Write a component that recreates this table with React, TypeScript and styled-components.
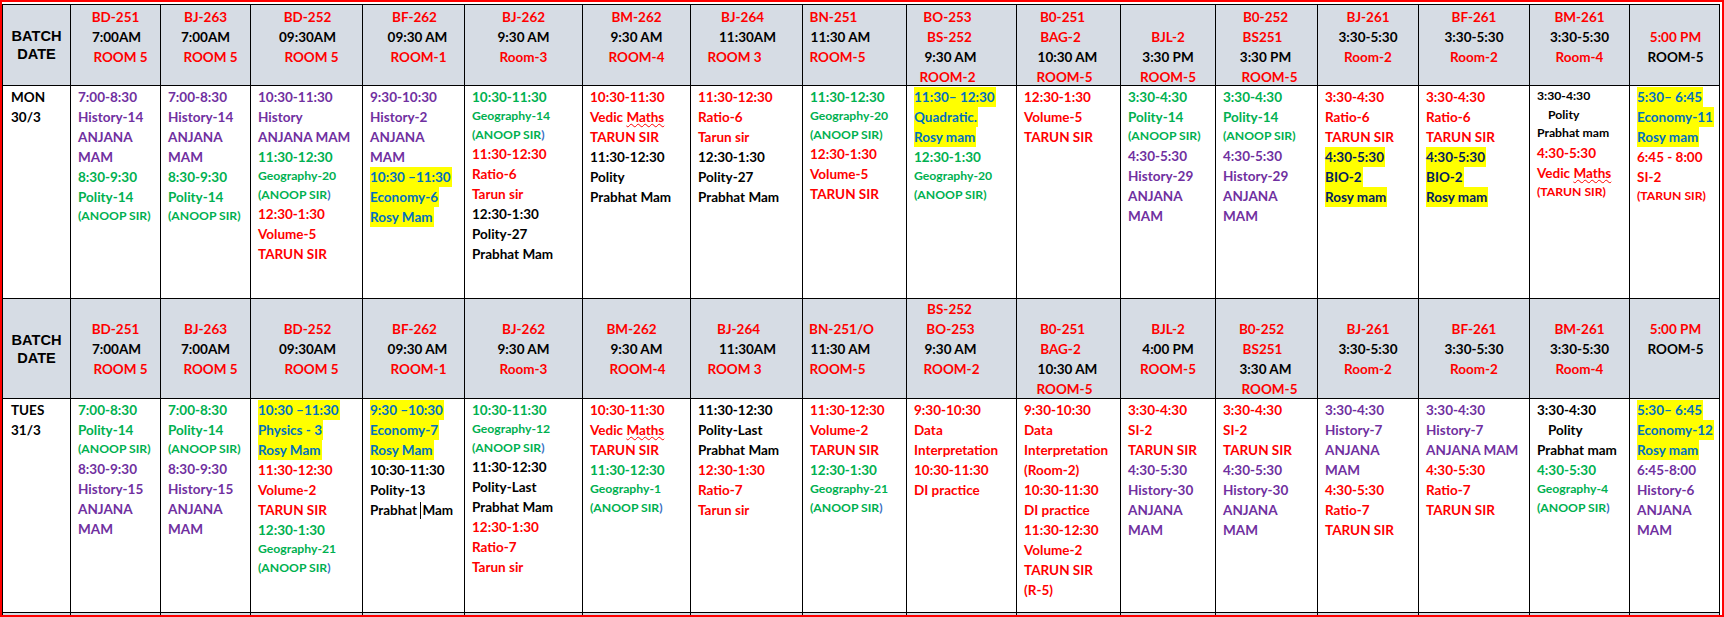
import React from 'react';
import styled, { createGlobalStyle } from 'styled-components';

const GlobalStyle = createGlobalStyle`
  html, body {
    margin: 0;
    padding: 0;
    background: #ffffff;
  }
  body {
    font-family: Lato, "Liberation Sans", sans-serif;
  }
`;

// widths of the cells between the black grid lines
const COLS = [67, 89, 89, 111, 101, 117, 107, 111, 103, 109, 103, 94, 101, 100, 110, 99, 89];

type Tone = 'r' | 'g' | 'p' | 'k' | 'b' | 'n';

const INK: Record<Tone, string> = {
    r: '#ff0000',
    g: '#00b050',
    p: '#7030a0',
    k: '#000000',
    b: '#0070c0',
    n: '#002060',
};

const Frame = styled.div`
    width: 1724px;
    height: 617px;
    box-sizing: border-box;
    border: 2px solid #ff0000;
    padding-top: 2px;
    overflow: hidden;
    background: #ffffff;
`;

const Sheet = styled.div`
    display: grid;
    grid-template-columns: ${COLS.map((c) => `${c}px`).join(' ')};
    grid-template-rows: 80px 212px 99px 213px 40px;
    gap: 1px;
    padding: 1px;
    width: max-content;
    background: #000000;
`;

const HeadCell = styled.div<{ $top: number }>`
    background: #d6dce4;
    padding-top: ${(p) => p.$top}px;
    text-align: center;
    font-weight: 700;
    font-size: 13.5px;
    line-height: 20px;
    white-space: nowrap;
`;

const HeadLine = styled.div<{ $tone: Tone; $shift: number }>`
    height: 20px;
    color: ${(p) => INK[p.$tone]};
    ${(p) => (p.$shift > 0 ? `padding-left: ${p.$shift * 2}px;` : `padding-right: ${-p.$shift * 2}px;`)}
`;

const BatchCell = styled.div`
    background: #d6dce4;
    display: flex;
    flex-direction: column;
    align-items: center;
    justify-content: center;
    font-family: "Liberation Sans", Arial, sans-serif;
    font-weight: 700;
    font-size: 14.6px;
    line-height: 18px;
    color: #000000;
`;

const BlankHead = styled.div`
    background: #d6dce4;
`;

const DateCell = styled.div`
    background: #ffffff;
    padding: 1px 0 0 8px;
    font-weight: 700;
    font-size: 13.5px;
    line-height: 20px;
    color: #000000;
`;

const BodyCell = styled.div`
    background: #ffffff;
    padding: 1px 0 0 7px;
    font-weight: 700;
    white-space: nowrap;
`;

const Line = styled.div<{ $tone: Tone; $small: boolean; $indent: boolean }>`
    color: ${(p) => INK[p.$tone]};
    font-size: ${(p) => (p.$small ? '12.2px' : '13.5px')};
    line-height: ${(p) => (p.$small ? '18.5px' : '20px')};
    padding-left: ${(p) => (p.$indent ? '11px' : '0')};
`;

const Mark = styled.span`
    display: inline-block;
    background: #ffff00;
    padding-right: 1px;
`;

const Squiggle = styled.span`
    text-decoration-line: underline;
    text-decoration-style: wavy;
    text-decoration-color: #ff0000;
    text-decoration-thickness: 1px;
    text-underline-offset: 1px;
    text-decoration-skip-ink: none;
`;

const Paren = styled.span`
    color: #3b6fc4;
`;

const Caret = styled.span`
    display: inline-block;
    width: 0;
    height: 17px;
    margin-right: 1px;
    border-left: 1px solid #000000;
    vertical-align: -4px;
`;

// "tone|text|shift", an empty string is an empty line
const HEAD_ONE: string[][] = [
    ['r|BD-251', 'k|7:00AM|1', 'r|ROOM 5|5'],
    ['r|BJ-263', 'k|7:00AM', 'r|ROOM 5|5'],
    ['r|BD-252|1', 'k|09:30AM|1', 'r|ROOM 5|5'],
    ['r|BF-262|1', 'k|09:30 AM|4', 'r|ROOM-1|5'],
    ['r|BJ-262', 'k|9:30 AM', 'r|Room-3'],
    ['r|BM-262', 'k|9:30 AM', 'r|ROOM-4'],
    ['r|BJ-264|-4', 'k|11:30AM|1', 'r|ROOM 3|-12'],
    ['r|BN-251|-21', 'k|11:30 AM|-14', 'r|ROOM-5|-17'],
    ['r|BO-253|-14', 'r|BS-252|-12', 'k|9:30 AM|-11', 'r|ROOM-2|-14'],
    ['r|B0-251|-6', 'r|BAG-2|-8', 'k|10:30 AM|-1', 'r|ROOM-5|-4'],
    ['', 'r|BJL-2', 'k|3:30 PM', 'r|ROOM-5'],
    ['r|B0-252|-1', 'r|BS251|-4', 'k|3:30 PM|-1', 'r|ROOM-5|3'],
    ['r|BJ-261', 'k|3:30-5:30', 'r|Room-2'],
    ['r|BF-261', 'k|3:30-5:30', 'r|Room-2'],
    ['r|BM-261', 'k|3:30-5:30', 'r|Room-4'],
    ['', 'r|5:00 PM|1', 'k|ROOM-5|1'],
];

const HEAD_TWO: string[][] = [
    ['', 'r|BD-251', 'k|7:00AM|1', 'r|ROOM 5|5'],
    ['', 'r|BJ-263', 'k|7:00AM', 'r|ROOM 5|5'],
    ['', 'r|BD-252|1', 'k|09:30AM|1', 'r|ROOM 5|5'],
    ['', 'r|BF-262|1', 'k|09:30 AM|4', 'r|ROOM-1|5'],
    ['', 'r|BJ-262', 'k|9:30 AM', 'r|Room-3'],
    ['', 'r|BM-262|-5', 'k|9:30 AM', 'r|ROOM-4|1'],
    ['', 'r|BJ-264|-8', 'k|11:30AM|1', 'r|ROOM 3|-12'],
    ['', 'r|BN-251/O|-13', 'k|11:30 AM|-14', 'r|ROOM-5|-17'],
    ['r|BS-252|-12', 'r|BO-253|-11', 'k|9:30 AM|-11', 'r|ROOM-2|-10'],
    ['', 'r|B0-251|-6', 'r|BAG-2|-8', 'k|10:30 AM|-1', 'r|ROOM-5|-4'],
    ['', 'r|BJL-2', 'k|4:00 PM', 'r|ROOM-5'],
    ['', 'r|B0-252|-5', 'r|BS251|-4', 'k|3:30 AM|-1', 'r|ROOM-5|3'],
    ['', 'r|BJ-261', 'k|3:30-5:30', 'r|Room-2'],
    ['', 'r|BF-261', 'k|3:30-5:30', 'r|Room-2'],
    ['', 'r|BM-261', 'k|3:30-5:30', 'r|Room-4'],
    ['', 'r|5:00 PM|1', 'k|ROOM-5|1'],
];

// tone + flags: s small, x blue closing paren, w wavy last word, i indent, c caret
const MON: string[][] = [
    ['p|7:00-8:30', 'p|History-14', 'p|ANJANA', 'p|MAM', 'g|8:30-9:30', 'g|Polity-14', 'gs|(ANOOP SIR)'],
    ['p|7:00-8:30', 'p|History-14', 'p|ANJANA', 'p|MAM', 'g|8:30-9:30', 'g|Polity-14', 'gs|(ANOOP SIR)'],
    ['p|10:30-11:30', 'p|History', 'p|ANJANA MAM', 'g|11:30-12:30', 'gs|Geography-20', 'gsx|(ANOOP SIR', 'r|12:30-1:30', 'r|Volume-5', 'r|TARUN SIR'],
    ['p|9:30-10:30', 'p|History-2', 'p|ANJANA', 'p|MAM', 'b|10:30 –11:30', 'b|Economy-6', 'b|Rosy Mam'],
    ['g|10:30-11:30', 'gs|Geography-14', 'gsx|(ANOOP SIR', 'r|11:30-12:30', 'r|Ratio-6', 'r|Tarun sir', 'k|12:30-1:30', 'k|Polity-27', 'k|Prabhat Mam'],
    ['r|10:30-11:30', 'rw|Vedic Maths', 'r|TARUN SIR', 'k|11:30-12:30', 'k|Polity', 'k|Prabhat Mam'],
    ['r|11:30-12:30', 'r|Ratio-6', 'r|Tarun sir', 'k|12:30-1:30', 'k|Polity-27', 'k|Prabhat Mam'],
    ['g|11:30-12:30', 'gs|Geography-20', 'gs|(ANOOP SIR)', 'r|12:30-1:30', 'r|Volume-5', 'r|TARUN SIR'],
    ['b|11:30– 12:30', 'b|Quadratic.', 'b|Rosy mam', 'g|12:30-1:30', 'gs|Geography-20', 'gs|(ANOOP SIR)'],
    ['r|12:30-1:30', 'r|Volume-5', 'r|TARUN SIR'],
    ['g|3:30-4:30', 'g|Polity-14', 'gs|(ANOOP SIR)', 'p|4:30-5:30', 'p|History-29', 'p|ANJANA', 'p|MAM'],
    ['g|3:30-4:30', 'g|Polity-14', 'gs|(ANOOP SIR)', 'p|4:30-5:30', 'p|History-29', 'p|ANJANA', 'p|MAM'],
    ['r|3:30-4:30', 'r|Ratio-6', 'r|TARUN SIR', 'n|4:30-5:30', 'n|BIO-2', 'n|Rosy mam'],
    ['r|3:30-4:30', 'r|Ratio-6', 'r|TARUN SIR', 'n|4:30-5:30', 'n|BIO-2', 'n|Rosy mam'],
    ['ks|3:30-4:30', 'ksi|Polity', 'ks|Prabhat mam', 'r|4:30-5:30', 'rw|Vedic Maths', 'rs|(TARUN SIR)'],
    ['b|5:30– 6:45', 'b|Economy-11', 'b|Rosy mam', 'r|6:45 - 8:00', 'r|SI-2', 'rs|(TARUN SIR)'],
];

const TUE: string[][] = [
    ['g|7:00-8:30', 'g|Polity-14', 'gs|(ANOOP SIR)', 'p|8:30-9:30', 'p|History-15', 'p|ANJANA', 'p|MAM'],
    ['g|7:00-8:30', 'g|Polity-14', 'gs|(ANOOP SIR)', 'p|8:30-9:30', 'p|History-15', 'p|ANJANA', 'p|MAM'],
    ['b|10:30 –11:30', 'b|Physics - 3', 'b|Rosy Mam', 'r|11:30-12:30', 'r|Volume-2', 'r|TARUN SIR', 'g|12:30-1:30', 'gs|Geography-21', 'gsx|(ANOOP SIR'],
    ['b|9:30 –10:30', 'b|Economy-7', 'b|Rosy Mam', 'k|10:30-11:30', 'k|Polity-13', 'kc|Prabhat Mam'],
    ['g|10:30-11:30', 'gs|Geography-12', 'gsx|(ANOOP SIR', 'k|11:30-12:30', 'k|Polity-Last', 'k|Prabhat Mam', 'r|12:30-1:30', 'r|Ratio-7', 'r|Tarun sir'],
    ['r|10:30-11:30', 'rw|Vedic Maths', 'r|TARUN SIR', 'g|11:30-12:30', 'gs|Geography-1', 'gsx|(ANOOP SIR'],
    ['k|11:30-12:30', 'k|Polity-Last', 'k|Prabhat Mam', 'r|12:30-1:30', 'r|Ratio-7', 'r|Tarun sir'],
    ['r|11:30-12:30', 'r|Volume-2', 'r|TARUN SIR', 'g|12:30-1:30', 'gs|Geography-21', 'gsx|(ANOOP SIR'],
    ['r|9:30-10:30', 'r|Data', 'r|Interpretation', 'r|10:30-11:30', 'r|DI practice'],
    ['r|9:30-10:30', 'r|Data', 'r|Interpretation', 'r|(Room-2)', 'r|10:30-11:30', 'r|DI practice', 'r|11:30-12:30', 'r|Volume-2', 'r|TARUN SIR', 'r|(R-5)'],
    ['r|3:30-4:30', 'r|SI-2', 'r|TARUN SIR', 'p|4:30-5:30', 'p|History-30', 'p|ANJANA', 'p|MAM'],
    ['r|3:30-4:30', 'r|SI-2', 'r|TARUN SIR', 'p|4:30-5:30', 'p|History-30', 'p|ANJANA', 'p|MAM'],
    ['p|3:30-4:30', 'p|History-7', 'p|ANJANA', 'p|MAM', 'r|4:30-5:30', 'r|Ratio-7', 'r|TARUN SIR'],
    ['p|3:30-4:30', 'p|History-7', 'p|ANJANA MAM', 'r|4:30-5:30', 'r|Ratio-7', 'r|TARUN SIR'],
    ['k|3:30-4:30', 'ki|Polity', 'k|Prabhat mam', 'g|4:30-5:30', 'gs|Geography-4', 'gsx|(ANOOP SIR'],
    ['b|5:30– 6:45', 'b|Economy-12', 'b|Rosy mam', 'p|6:45-8:00', 'p|History-6', 'p|ANJANA', 'p|MAM'],
];

const Head = ({ lines, top }: { lines: string[]; top: number }) => (
    <HeadCell $top={top}>
        {lines.map((code, i) => {
            if (!code) return <HeadLine key={i} $tone="k" $shift={0} />;
            const [tone, text, shift] = code.split('|');
            return (
                <HeadLine key={i} $tone={tone as Tone} $shift={Number(shift || 0)}>
                    {text}
                </HeadLine>
            );
        })}
    </HeadCell>
);

const lineText = (flags: string, text: string) => {
    if (flags.includes('w')) {
        const cut = text.lastIndexOf(' ');
        return (
            <>
                {text.slice(0, cut + 1)}
                <Squiggle>{text.slice(cut + 1)}</Squiggle>
            </>
        );
    }
    if (flags.includes('x')) {
        return (
            <>
                {text}
                <Paren>)</Paren>
            </>
        );
    }
    if (flags.includes('c')) {
        const cut = text.indexOf(' ');
        return (
            <>
                {text.slice(0, cut + 1)}
                <Caret />
                {text.slice(cut + 1)}
            </>
        );
    }
    return text;
};

const Slot = ({ lines }: { lines: string[] }) => (
    <BodyCell>
        {lines.map((code, i) => {
            const [head, text] = code.split('|');
            const tone = head[0] as Tone;
            const flags = head.slice(1);
            const body = lineText(flags, text);
            return (
                <Line key={i} $tone={tone} $small={flags.includes('s')} $indent={flags.includes('i')}>
                    {tone === 'b' || tone === 'n' ? <Mark>{body}</Mark> : body}
                </Line>
            );
        })}
    </BodyCell>
);

const Batch = () => (
    <BatchCell>
        <span>BATCH</span>
        <span>DATE</span>
    </BatchCell>
);

const Day = ({ name, date }: { name: string; date: string }) => (
    <DateCell>
        <div>{name}</div>
        <div>{date}</div>
    </DateCell>
);

const App = () => (
    <>
        <GlobalStyle />
        <Frame>
            <Sheet>
                <Batch />
                {HEAD_ONE.map((lines, i) => (
                    <Head key={`h1-${i}`} lines={lines} top={2} />
                ))}
                <Day name="MON" date="30/3" />
                {MON.map((lines, i) => (
                    <Slot key={`mon-${i}`} lines={lines} />
                ))}
                <Batch />
                {HEAD_TWO.map((lines, i) => (
                    <Head key={`h2-${i}`} lines={lines} top={0} />
                ))}
                <Day name="TUES" date="31/3" />
                {TUE.map((lines, i) => (
                    <Slot key={`tue-${i}`} lines={lines} />
                ))}
                {COLS.map((_, i) => (
                    <BlankHead key={`tail-${i}`} />
                ))}
            </Sheet>
        </Frame>
    </>
);

export default App;
